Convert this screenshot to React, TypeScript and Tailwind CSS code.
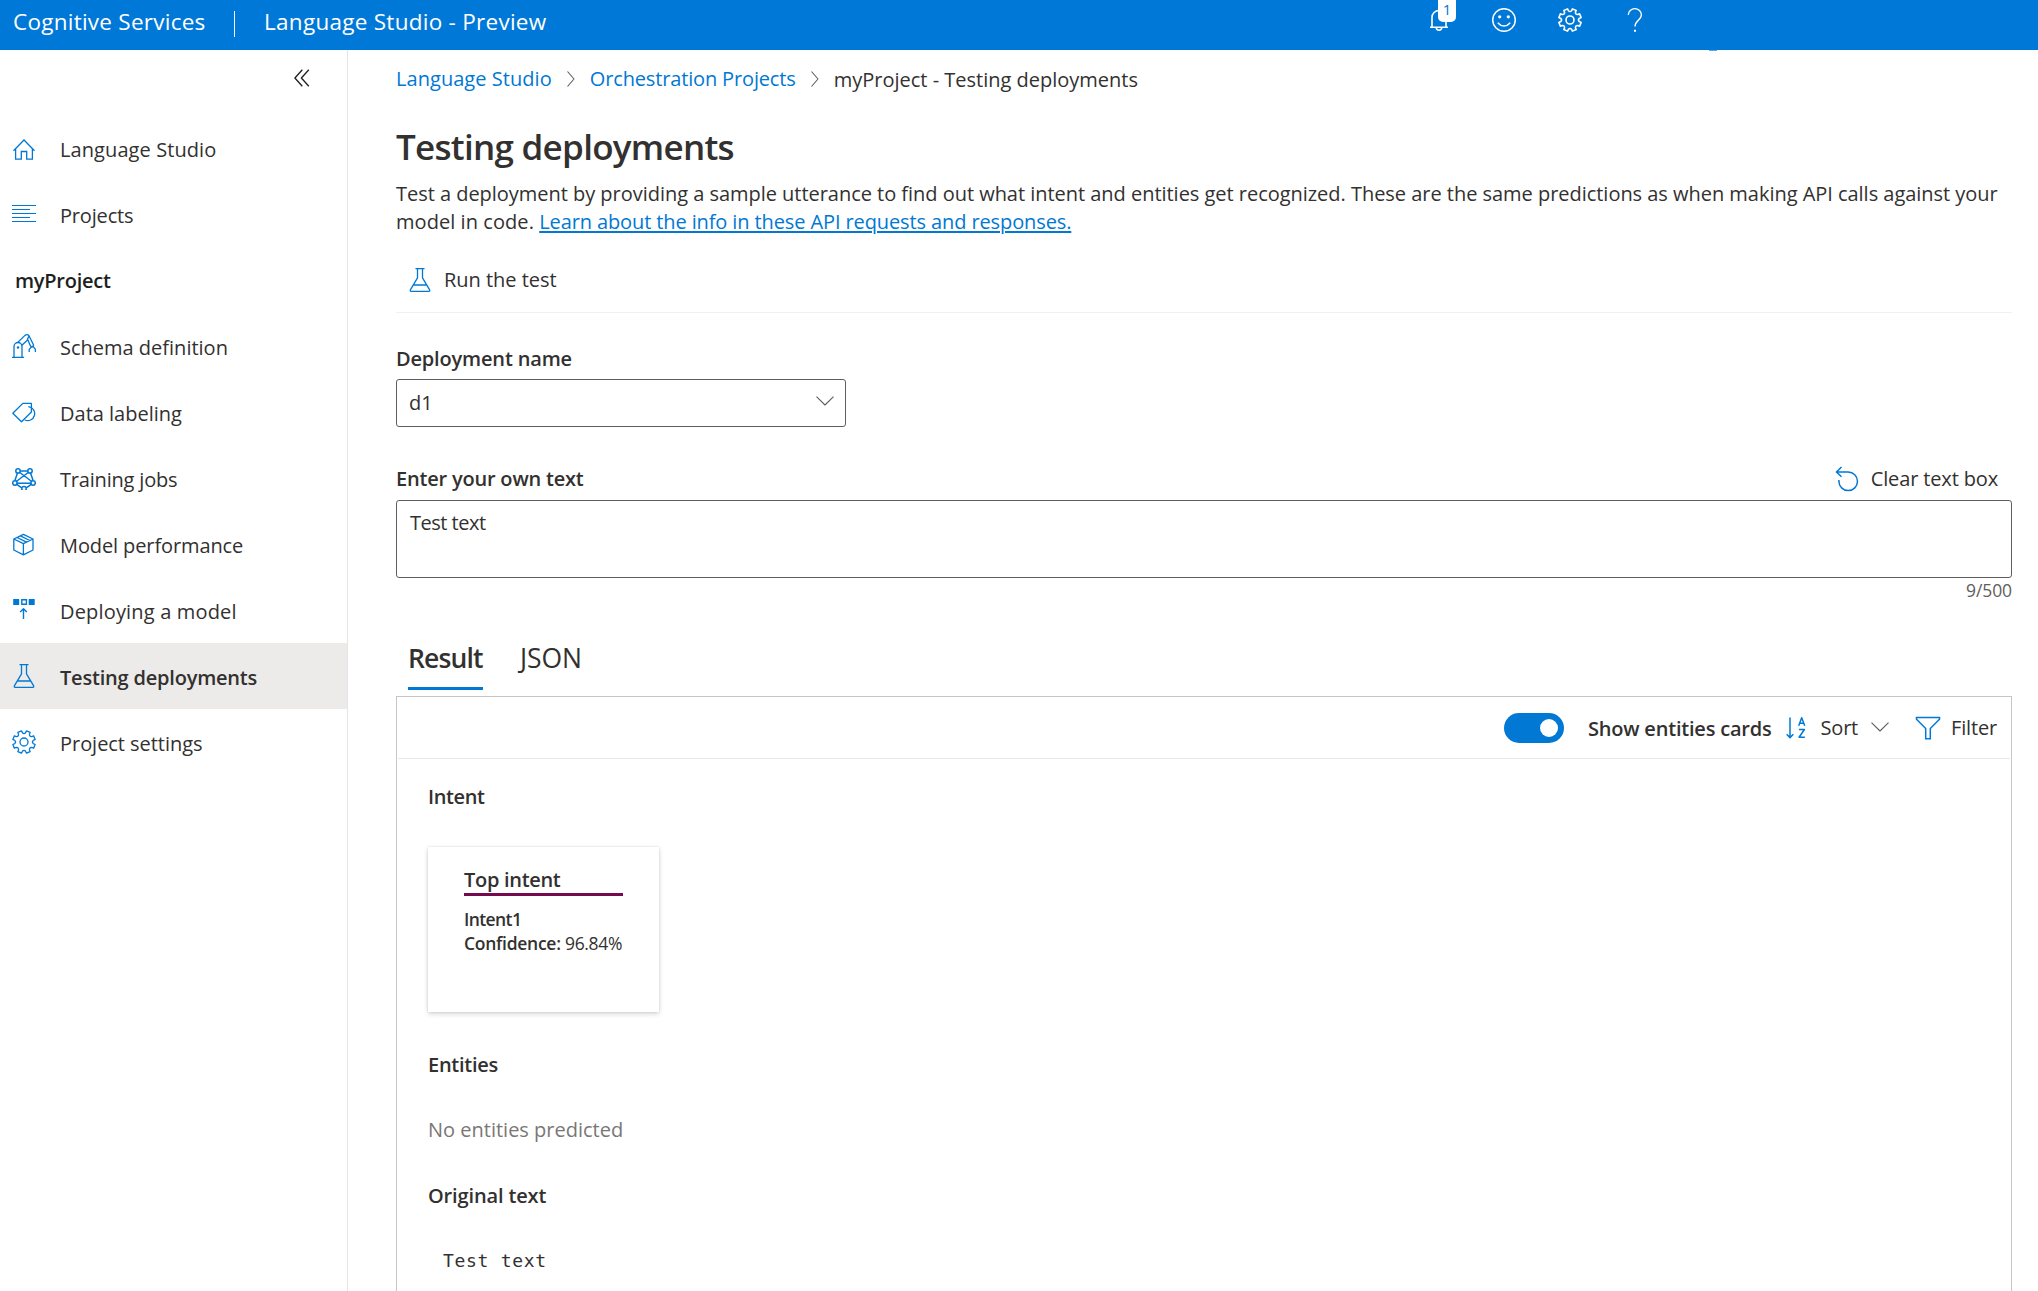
import React from "react";

type IconProps = { className?: string };

const base = {
  fill: "none",
  stroke: "currentColor",
  strokeWidth: 1.3,
  strokeLinejoin: "round" as const,
};

const HomeIcon = () => (
  <svg viewBox="0 -2 24 24" className="size-6" {...base}>
    <path d="M1.5 12.7 12 2l10.500 10.700M3.600 10.900v10.300h5.700v-7.700h5.400v7.700h5.700V10.900" strokeLinejoin="miter" />
  </svg>
);

const LinesIcon = () => (
  <svg viewBox="0 0 24 24" className="size-6" {...base} strokeWidth={1}>
    <path d="M0 3.500h24M0 7.500h18M0 11.500h24M0 15.500h18M0 19.500h24" />
  </svg>
);

const RobotArmIcon = () => (
  <svg viewBox="0 0 24 24" className="size-6" {...base}>
    <path d="M0 23.400h12M2 23.400V12.500a4 4 0 0 1 8 0v10.900" />
    <circle cx="6" cy="13.500" r="1.200" fill="currentColor" stroke="none" />
    <path d="M5.500 8.600 13 1.400Q15.200-.2 17 1.800L21.800 11.500M9.600 11.400l6.200-5.600 3 7" />
    <path d="M15.200 5.600 17 2M18.600 13l3.300-1.400M17.200 18v-2.600l2.500-2.600h1.700l2 2.600V18" />
  </svg>
);

const TagIcon = () => (
  <svg viewBox="0 -2 24 24" className="size-6" {...base}>
    <path d="M.8 11.300 10.800 1.400h8.600v8.600l-9.900 9.800z" />
    <path d="M16.300 4.700a7 7 0 1 1-3.600 13.300" />
  </svg>
);

const NetworkIcon = () => (
  <svg viewBox="0 -2 24 24" className="size-6" {...base} strokeWidth={1.500}>
    <path d="M8.200 2.900h7.600M5.500 5 2.900 12.600M18.500 5l2.600 7.600M4.700 15.300h14.600M4.400 16.200l5.400 3.700M19.600 16.200l-5.400 3.700M7.800 4.500l12 9M16.200 4.500l-12 9" />
    <circle cx="6" cy="2.900" r="2.200" />
    <circle cx="18" cy="2.900" r="2.200" />
    <circle cx="2.900" cy="15" r="2.200" />
    <circle cx="21.100" cy="15" r="2.200" />
    <circle cx="12" cy="20.600" r="2.200" />
  </svg>
);

const BoxIcon = () => (
  <svg viewBox="0 -1.300 24 24" className="size-6" {...base}>
    <path d="M11.400 1 21 5.700v11l-9.600 4.800-9.600-4.800v-11zM1.800 5.700l9.600 4.700L21 5.700M11.400 10.400v11.100M8.300 2.500l9.600 4.700M5 4.200l9.600 4.700" />
  </svg>
);

const DeployIcon = () => (
  <svg viewBox="0 0 24 24" className="size-6" {...base}>
    <path d="M1.200 1h6v6h-6zM16.700 1h6v6h-6z" fill="currentColor" stroke="none" />
    <path d="M9.800 1.700h4.600v4.600H9.800z" strokeWidth={1.400} strokeLinejoin="miter" />
    <path d="M11.500 21V10.800M8.200 14l3.300-3.300 3.300 3.300" strokeWidth={1.400} />
  </svg>
);

const FlaskIcon = ({ className = "size-6" }: IconProps) => (
  <svg viewBox="0 0 24 24" className={className} {...base}>
    <path d="M7.500.7h9M9.500.7v9.100L2.500 21.700q-.8 1.700 1 1.700h17q1.800 0 1-1.700L14.500 9.800V.7M5.300 17h13.400" />
  </svg>
);

const polar = (deg: number, r: number) => {
  const a = (deg * Math.PI) / 180;
  return `${(12 + r * Math.sin(a)).toFixed(2)} ${(12 - r * Math.cos(a)).toFixed(2)}`;
};

/* Eight flat-tipped teeth joined by inward-curving valleys. */
const gearPath =
  Array.from({ length: 8 }, (_, i) => {
    const a = 22.5 + i * 45;
    return `${i === 0 ? "M" : "L"}${polar(a - 13, 9.4)} L${polar(a - 10, 11.4)} L${polar(a + 10, 11.4)} L${polar(a + 13, 9.4)} Q${polar(a + 22.5, 7.6)} ${polar(a + 32, 9.4)}`;
  }).join(" ") + "Z";

const GearIcon = ({ className = "size-6" }: IconProps) => (
  <svg viewBox="0 0 24 24" className={className} {...base}>
    <path d={gearPath} />
    <circle cx="12" cy="12" r="4" />
  </svg>
);

const BellIcon = () => (
  <svg viewBox="0 0 20 24" className="h-6 w-5" {...base} strokeWidth={1.600}>
    <path d="M1 19.200h18M3 19.200V9.500a7 7 0 0 1 14 0v9.700M7.300 19.500a2.700 2.700 0 0 0 5.400 0" />
  </svg>
);

const SmileIcon = () => (
  <svg viewBox="0 0 24 24" className="size-6" {...base} strokeWidth={1.500}>
    <circle cx="12" cy="12" r="11.300" />
    <circle cx="7.700" cy="8.800" r="1.600" fill="currentColor" stroke="none" />
    <circle cx="16.300" cy="8.800" r="1.600" fill="currentColor" stroke="none" />
    <path d="M5.700 14.700q6.300 6.800 12.600 0" />
  </svg>
);

const HelpIcon = () => (
  <svg viewBox="0 0 16 24" className="h-6 w-4" {...base} strokeWidth={1.400}>
    <path d="M1.300 7A6.500 6.300 0 0 1 14.400 7c0 4.500-6.400 5.600-6.400 11.500" />
    <path d="M7 21.800h2v2H7z" fill="currentColor" stroke="none" />
  </svg>
);

const ChevronRight = () => (
  <svg viewBox="0 0 10 18" className="h-[18px] w-[10px] text-[#605e5c]" {...base} strokeWidth={1.100}>
    <path d="m1.500 1.500 6.500 7.500-6.500 7.500" />
  </svg>
);

const ChevronDown = ({ className }: IconProps) => (
  <svg viewBox="0 0 18 10" className={className} {...base} strokeWidth={1.100}>
    <path d="m.5.700 8.500 8.300L17.500.7" />
  </svg>
);

const CollapseIcon = () => (
  <svg viewBox="0 0 16 18" className="h-[18px] w-4 text-[#201f1e]" {...base}>
    <path d="M8.300.8.900 9l7.400 8.200M14.800.8 7.400 9l7.400 8.200" />
  </svg>
);

const UndoIcon = () => (
  <svg viewBox="0 0 24 26" className="h-[26px] w-6 text-[#0078d4]" {...base} strokeWidth={1.500}>
    <path d="M6.500 1 1.500 6l5 4.700M1.500 6h11.700a9.300 9.300 0 1 1-9.300 9.300V14" strokeLinejoin="miter" />
  </svg>
);

const SortIcon = () => (
  <svg viewBox="0 0 20 22" className="h-[22px] w-5 text-[#0078d4]" {...base} strokeWidth={1.500}>
    <path d="M4 .5v20M.7 17.300 4 20.600l3.300-3.300" />
    <path d="m12.700 8.800 3-8 3 8M13.600 6.300h4.200M12.900 12.500h5.500l-5.300 7.700h5.700" />
  </svg>
);

const FunnelIcon = () => (
  <svg viewBox="0 0 26 24" className="h-6 w-[26px] text-[#0078d4]" {...base} strokeWidth={1.500}>
    <path d="M1.500 1.500h23v1.700L15.300 12.500v10.200h-4.600V12.500L1.500 3.200z" strokeLinejoin="miter" />
  </svg>
);

const projectNav = [
  { label: "Schema definition", icon: RobotArmIcon, track: "tracking-normal" },
  { label: "Data labeling", icon: TagIcon, track: "tracking-normal" },
  { label: "Training jobs", icon: NetworkIcon, track: "tracking-[-0.19px]" },
  { label: "Model performance", icon: BoxIcon, track: "tracking-[-0.11px]" },
  { label: "Deploying a model", icon: DeployIcon, track: "tracking-[0.17px]" },
  { label: "Testing deployments", icon: FlaskIcon, track: "tracking-[-0.2px]", active: true },
  { label: "Project settings", icon: GearIcon, track: "tracking-[-0.04px]" },
];

function NavItem({
  label,
  icon: Icon,
  track,
  active,
}: {
  label: string;
  icon: React.ComponentType<IconProps>;
  track: string;
  active?: boolean;
}) {
  return (
    <li className={`flex h-[66px] items-center gap-6 pl-3 ${active ? "bg-[#edebe9] font-semibold" : ""}`}>
      <span className="text-[#0078d4]">
        <Icon />
      </span>
      <span className={`pt-[3px] ${track}`}>{label}</span>
    </li>
  );
}

export default function App() {
  return (
    <div className="flex h-screen flex-col overflow-hidden bg-white font-['Open_Sans',sans-serif] text-[20px] leading-6 whitespace-nowrap text-[#323130]">
      <header className="relative flex h-[50px] shrink-0 items-center bg-[#0078d7] text-[22.5px] text-white">
        <div className="flex w-[1429px] items-center pb-[6px] pl-[13px]">
          <span className="tracking-[0.25px]">Cognitive Services</span>
          <span className="ml-[28px] h-[26px] w-[1.5px] translate-y-[2px] bg-white" />
          <span className="ml-[29px] tracking-[0.27px]">Language Studio - Preview</span>
        </div>
        <div className="flex items-center pb-[11px]">
          <div className="relative">
            <BellIcon />
            <span className="absolute -top-3 left-[9px] flex h-[26px] w-[18px] items-end justify-center rounded-[5px] bg-white pb-1 text-[15px] leading-[17px] text-[#0078d4]">
              1
            </span>
          </div>
          <span className="ml-[43px]">
            <SmileIcon />
          </span>
          <span className="ml-[42px]">
            <GearIcon className="size-6 [stroke-width:1.6]" />
          </span>
          <span className="ml-[45px]">
            <HelpIcon />
          </span>
        </div>
        <span className="absolute top-[50px] left-[1709px] h-px w-2 bg-[#5ea9e3]" />
      </header>

      <div className="flex min-h-0 flex-1">
        <nav className="w-[348px] shrink-0 border-r border-[#e5e5e5]">
          <div className="flex h-[65px] justify-end pt-[19px] pr-[37px]">
            <CollapseIcon />
          </div>
          <ul>
            <NavItem label="Language Studio" icon={HomeIcon} track="tracking-[0.09px]" />
            <NavItem label="Projects" icon={LinesIcon} track="tracking-[-0.17px]" />
            <li className="flex h-[66px] items-center pt-[2px] pl-[15px] font-semibold tracking-[-0.24px] text-[#201f1e]">
              myProject
            </li>
            {projectNav.map((item) => (
              <NavItem key={item.label} {...item} />
            ))}
          </ul>
        </nav>

        <main className="flex min-w-0 flex-1 flex-col pr-[26px] pl-12">
          <div className="flex h-14 items-center pt-px text-[#0078d4]">
            <a className="tracking-[0.05px]">Language Studio</a>
            <span className="mr-[14px] ml-[14px]">
              <ChevronRight />
            </span>
            <a className="tracking-[-0.15px]">Orchestration Projects</a>
            <span className="mr-[14px] ml-[14px]">
              <ChevronRight />
            </span>
            <span className="pt-[2px] text-[#323130]">myProject - Testing deployments</span>
          </div>

          <h1 className="h-[73px] pt-2 text-[35px] leading-[65px] font-semibold tracking-[-0.72px]">
            Testing deployments
          </h1>

          <p className="relative top-px leading-7 tracking-[-0.03px]">
            Test a deployment by providing a sample utterance to find out what intent and entities get recognized. These
            are the same predictions as when making API calls against your
            <br />
            <span className="tracking-[0.06px]">model in code. </span>
            <a className="tracking-[-0.11px] text-[#0078d4] underline decoration-[1.5px] underline-offset-[2px]">
              Learn about the info in these API requests and responses.
            </a>
          </p>

          <div className="mt-3 flex h-[66px] shrink-0 items-center gap-3 border-b border-[#f0f0f0] pl-3">
            <FlaskIcon className="size-6 text-[#0078d4]" />
            <span className="tracking-[-0.03px]">Run the test</span>
          </div>

          <label className="mt-[25px] h-[41px] shrink-0 leading-[41px] font-semibold tracking-[-0.17px]">
            Deployment name
          </label>
          <div className="flex h-12 w-[450px] shrink-0 items-center justify-between rounded-[3px] border border-[#605e5c] pr-[11px] pl-3">
            <span>d1</span>
            <ChevronDown className="mb-1 h-[10px] w-[18px] text-[#605e5c]" />
          </div>

          <div className="mt-[31px] flex h-[42px] shrink-0 items-center justify-between">
            <label className="font-semibold tracking-[-0.2px]">Enter your own text</label>
            <div className="flex items-center gap-3 pr-[14px]">
              <UndoIcon />
              <span className="tracking-[-0.14px]">Clear text box</span>
            </div>
          </div>
          <div className="h-[78px] shrink-0 rounded-[3px] border border-[#605e5c] px-[13px] pt-2 leading-7 tracking-[-0.5px]">
            Test text
          </div>
          <div className="h-6 shrink-0 text-right text-[17.5px] tracking-[-0.11px] text-[#605e5c]">9/500</div>

          <div className="mt-[23px] flex h-[65px] shrink-0 pl-3 text-[26.5px] leading-[66px]">
            <span className="w-[75px] border-b-[3px] border-[#0078d4] font-semibold tracking-[-0.86px]">Result</span>
            <span className="ml-9 pl-px tracking-[-0.1px]">JSON</span>
          </div>

          <section className="mt-[6px] min-h-0 flex-1 border border-b-0 border-[#c8c6c4]">
            <div className="mx-px flex h-[62px] items-center justify-end border-b border-[#e8e8e8] pr-[13px]">
              <span className="flex h-[30px] w-[60px] items-center justify-end rounded-full bg-[#0078d4] pr-[6px]">
                <span className="size-[18px] rounded-full bg-white" />
              </span>
              <span className="ml-6 pt-[2px] font-semibold tracking-[-0.2px]">Show entities cards</span>
              <span className="ml-[14px]">
                <SortIcon />
              </span>
              <span className="ml-[15px] tracking-[-0.22px]">Sort</span>
              <ChevronDown className="mb-px ml-[13px] h-[10px] w-[18px] text-[#605e5c]" />
              <span className="ml-[26px]">
                <FunnelIcon />
              </span>
              <span className="ml-[10px] tracking-[-0.16px]">Filter</span>
            </div>

            <div className="pl-[31px]">
              <h2 className="h-[76px] leading-[76px] font-semibold tracking-[-0.4px]">Intent</h2>
              <div className="mt-3 h-[165px] w-[231px] bg-white px-9 pt-5 shadow-[0_2px_5px_rgba(0,0,0,0.16),0_0_2px_rgba(0,0,0,0.12)]">
                <div className="h-[29px] border-b-[3px] border-[#750b4f] leading-[26px] font-semibold tracking-[-0.3px]">
                  Top intent
                </div>
                <div className="mt-[11px] text-[17.5px] font-semibold tracking-[-0.6px]">Intent1</div>
                <div className="text-[17.5px]">
                  <span className="font-semibold tracking-[-0.28px]">Confidence: </span>
                  <span className="tracking-[-0.32px]">96.84%</span>
                </div>
              </div>
              <h2 className="mt-[41px] font-semibold tracking-[-0.27px]">Entities</h2>
              <p className="mt-[41px] text-[#797775]">No entities predicted</p>
              <h2 className="mt-[42px] font-semibold tracking-[-0.14px]">Original text</h2>
              <p className="mt-[41px] pl-[15px] font-['DejaVu_Sans_Mono',monospace] text-[18px] tracking-[0.7px]">
                Test text
              </p>
            </div>
          </section>
        </main>
      </div>
    </div>
  );
}
